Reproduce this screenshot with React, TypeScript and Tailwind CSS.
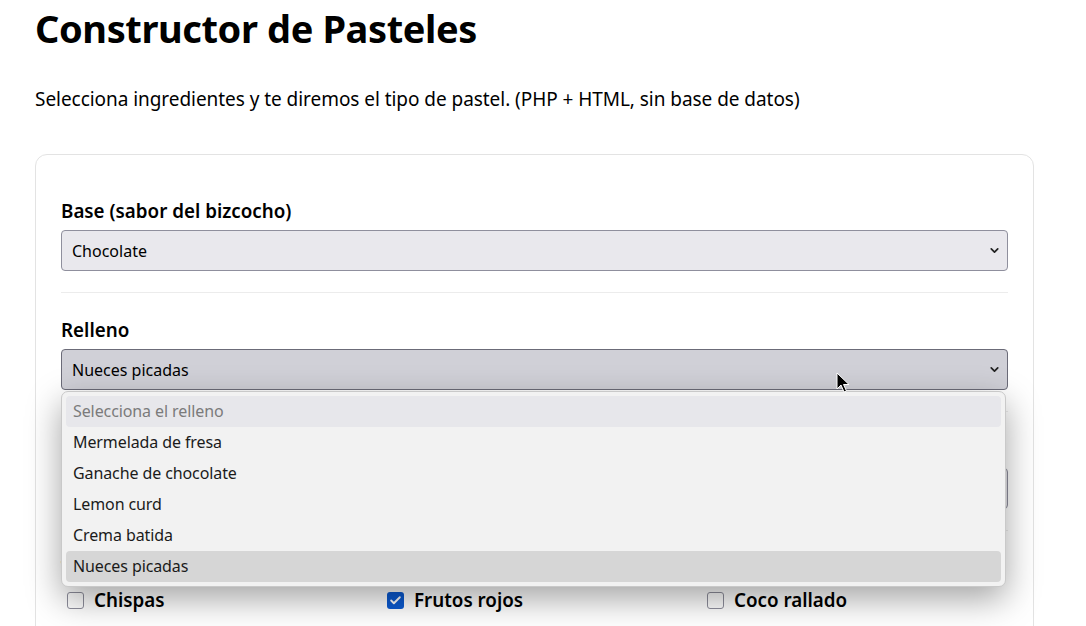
import { ChevronDown, Check } from "lucide-react";

const rellenos = [
  "Selecciona el relleno",
  "Mermelada de fresa",
  "Ganache de chocolate",
  "Lemon curd",
  "Crema batida",
  "Nueces picadas",
];

function FakeSelect({ value, hover = false }: { value: string; hover?: boolean }) {
  return (
    <div
      className={`flex h-[41px] items-center justify-between rounded-[4px] border pl-[10px] pr-[6px] text-[16px] text-black ${
        hover ? "border-[#6b6b78] bg-[#d0d0d7]" : "border-[#8f8f9d] bg-[#e9e8ed]"
      }`}
    >
      <span>{value}</span>
      <ChevronDown className="h-[13px] w-[13px] text-[#222]" strokeWidth={3.2} />
    </div>
  );
}

function Checkbox({ label, checked = false }: { label: string; checked?: boolean }) {
  return (
    <label className="flex items-center gap-[10px] pl-[6px] text-[18.8px] font-semibold">
      {checked ? (
        <span className="flex h-[17px] w-[17px] items-center justify-center rounded-[3px] bg-[#0b5ad1]">
          <Check className="h-[13px] w-[13px] text-white" strokeWidth={3.5} />
        </span>
      ) : (
        <span className="h-[17px] w-[17px] rounded-[3px] border border-[#8f8f9d] bg-white" />
      )}
      {label}
    </label>
  );
}

export default function App() {
  return (
    <div
      className="relative h-[626px] overflow-hidden bg-white px-[35px] pt-[2px] text-black"
      style={{ fontFamily: '"Noto Sans", "Open Sans", sans-serif' }}
    >
      {/* Header */}
      <h1 className="text-[38px] font-bold leading-[52px] tracking-[-0.4px]">Constructor de Pasteles</h1>
      <p className="mt-[32px] text-[19px] leading-[26px] tracking-[-0.05px]">
        Selecciona ingredientes y te diremos el tipo de pastel. (PHP + HTML, sin base de datos)
      </p>

      {/* Card */}
      <div className="mt-[42px] mr-[17px] rounded-[12px] border border-[#e3e3e3] px-[25px] pt-[44px] pb-[40px]">
        <div>
          <div className="mb-[7px] text-[18.8px] font-semibold leading-[24px]">Base (sabor del bizcocho)</div>
          <FakeSelect value="Chocolate" />
        </div>

        <div className="mt-[21px] mb-[25px] h-px bg-[#ececec]" />

        <div className="relative">
          <div className="mb-[7px] text-[18.8px] font-semibold leading-[24px]">Relleno</div>
          <FakeSelect value="Nueces picadas" hover />

          {/* Dropdown abierto */}
          <div className="absolute left-0 right-[2px] top-[73px] z-20 rounded-[7px] border border-[#c9c9c9] bg-[#f2f2f2] p-[4px] shadow-[0_12px_34px_rgba(0,0,0,0.36)]">
            {rellenos.map((r, i) => (
              <div
                key={r}
                className={`h-[31px] rounded-[4px] px-[7px] text-[16px] leading-[31px] tracking-[-0.1px] ${
                  i === 0 ? "bg-[#e7e7eb] text-[#7b7b7b]" : i === rellenos.length - 1 ? "bg-[#d6d6d6] text-[#1b1b1b]" : "text-[#1b1b1b]"
                }`}
              >
                {r}
              </div>
            ))}
          </div>
        </div>

        <div className="mt-[21px] mb-[25px] h-px bg-[#ececec]" />

        <div>
          <div className="mb-[7px] text-[18.8px] font-semibold leading-[24px]">Cobertura</div>
          <FakeSelect value="Buttercream" />
        </div>

        <div className="mt-[21px] mb-[25px] h-px bg-[#ececec]" />

        <div>
          <div className="mb-[6px] text-[18.8px] font-semibold leading-[24px]">Toppings</div>
          <div className="grid grid-cols-3 gap-[13px]">
            <Checkbox label="Chispas" />
            <Checkbox label="Frutos rojos" checked />
            <Checkbox label="Coco rallado" />
          </div>
        </div>
      </div>

      {/* Mouse cursor */}
      <svg className="absolute left-[836px] top-[372px] z-30" width="14" height="22" viewBox="0 0 14 22">
        <path d="M1 1 L1 17 L5 13 L8 20 L10.5 19 L7.5 12.5 L13 12.5 Z" fill="#000" stroke="#fff" strokeWidth="1" />
      </svg>
    </div>
  );
}
